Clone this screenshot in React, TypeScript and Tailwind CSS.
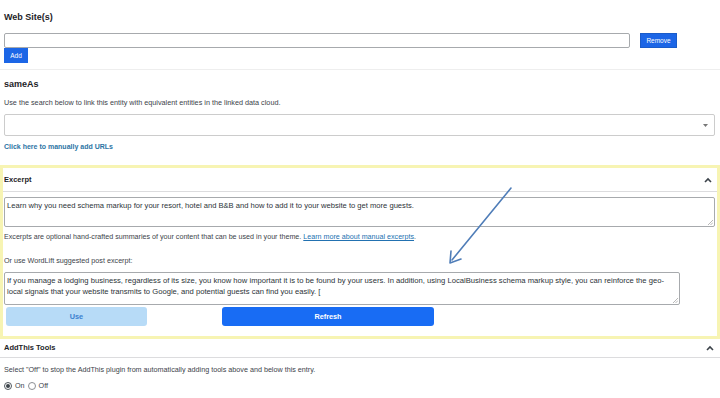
import React from "react";

const Chevron = () => (
  <svg width="8" height="6" viewBox="0 0 8 6" className="block">
    <polyline points="1,5 4,2 7,5" fill="none" stroke="#3c434a" strokeWidth="1.6" />
  </svg>
);

const Grip = () => (
  <svg width="6" height="6" viewBox="0 0 6 6" className="absolute right-[1px] bottom-[1px]">
    <line x1="1" y1="6" x2="6" y2="1" stroke="#999" strokeWidth="0.7" />
    <line x1="3.5" y1="6" x2="6" y2="3.5" stroke="#999" strokeWidth="0.7" />
  </svg>
);

export default function App() {
  return (
    <div
      className="relative w-[720px] h-[398px] overflow-hidden bg-white text-[#3c434a]"
      style={{ fontFamily: '"Liberation Sans", Arial, sans-serif' }}
    >
      {/* Web Site(s) */}
      <div className="pt-[11px] px-[4px] pb-[6px] border-b border-[#eeeeee]">
        <div className="h-[12px] leading-[12px] text-[9px] font-bold text-[#1d2327]">Web Site(s)</div>
        <div className="mt-[10px] flex items-center h-[15px]">
          <div className="w-[626px] h-[15px] border border-[#a7aaad] rounded-[2px] bg-white" />
          <div className="ml-[10px] w-[37px] h-[15px] bg-[#1c66e6] border border-[#1a5cc9] text-white text-[6.5px] leading-[13px] text-center">
            Remove
          </div>
        </div>
        <div className="w-[24px] h-[15px] bg-[#1c66e6] text-white text-[6.5px] leading-[15px] text-center">Add</div>
      </div>

      {/* sameAs */}
      <div className="px-[4px] pt-[8px]">
        <div className="h-[12px] leading-[12px] text-[9px] font-bold text-[#1d2327]">sameAs</div>
        <div className="mt-[8px] h-[10px] leading-[10px] text-[7.25px]">
          Use the search below to link this entity with equivalent entities in the linked data cloud.
        </div>
        <div className="mt-[6px] w-[711px] h-[22px] border border-[#cccccc] rounded-[2px] flex items-center justify-end pr-[6px]">
          <svg width="5" height="3" viewBox="0 0 5 3">
            <polygon points="0,0 5,0 2.5,3" fill="#777" />
          </svg>
        </div>
        <div className="mt-[6px] h-[10px] leading-[10px] text-[7px] font-bold text-[#2c74a4]">
          Click here to manually add URLs
        </div>
      </div>

      {/* Excerpt panel (highlighted) */}
      <div className="mt-[13px] border-[3px] border-[#f7f4b3] bg-white">
        <div className="h-[24px] flex items-center justify-between pl-[1px] pr-[5px] border-b border-[#dcdcde]">
          <span className="text-[7.5px] font-bold text-[#1d2327]">Excerpt</span>
          <Chevron />
        </div>
        <div className="pl-[1px] pr-[2px]">
          <div className="relative mt-[5px] h-[30px] border border-[#a7aaad] rounded-[2px] px-[2px] pt-[3px] text-[7.6px] leading-[10px] text-[#2c3338]">
            Learn why you need schema markup for your resort, hotel and B&amp;B and how to add it to your website to get more guests.
            <Grip />
          </div>
          <div className="mt-[5px] h-[10px] leading-[10px] text-[7.15px]">
            Excerpts are optional hand-crafted summaries of your content that can be used in your theme.{" "}
            <span className="text-[#2271b1] underline">Learn more about manual excerpts</span>.
          </div>
          <div className="mt-[14px] h-[10px] leading-[10px] text-[7.2px]">Or use WordLift suggested post excerpt:</div>
          <div className="relative mt-[6px] w-[676px] h-[33px] border border-[#a7aaad] rounded-[2px] pl-[2px] pr-[8px] pt-[2px] text-[7.65px] leading-[11px] text-[#2c3338]">
            If you manage a lodging business, regardless of its size, you know how important it is to be found by your users. In addition, using LocalBusiness schema markup style, you can reinforce the geo-local signals that your website transmits to Google, and potential guests can find you easily. [
            <Grip />
          </div>
          <div className="mt-[2px] flex items-center pl-[2px] pb-[10px]">
            <div className="w-[141px] h-[19px] rounded-[3px] bg-[#b7dbf7] text-[#3b80cf] text-[7.3px] font-bold leading-[19px] text-center">
              Use
            </div>
            <div className="ml-[75px] w-[212px] h-[19px] rounded-[3px] bg-[#186cf4] text-white text-[7.3px] font-bold leading-[19px] text-center">
              Refresh
            </div>
          </div>
        </div>
      </div>

      {/* AddThis Tools */}
      <div className="h-[19px] flex items-center justify-between pl-[4px] pr-[6px] border-b border-[#dcdcde]">
        <span className="text-[7.5px] font-bold text-[#1d2327]">AddThis Tools</span>
        <Chevron />
      </div>
      <div className="px-[4px]">
        <div className="mt-[7px] h-[10px] leading-[10px] text-[7.2px]">
          Select "Off" to stop the AddThis plugin from automatically adding tools above and below this entry.
        </div>
        <div className="mt-[6px] h-[10px] flex items-center text-[7.2px]">
          <span className="w-[8px] h-[8px] rounded-full border border-[#50575e] flex items-center justify-center">
            <span className="w-[4px] h-[4px] rounded-full bg-[#3c434a]" />
          </span>
          <span className="ml-[3px]">On</span>
          <span className="ml-[3px] w-[8px] h-[8px] rounded-full border border-[#8c8f94]" />
          <span className="ml-[3px]">Off</span>
        </div>
      </div>

      {/* Annotation arrow */}
      <svg className="absolute left-0 top-0 pointer-events-none" width="720" height="398">
        <line x1="511" y1="188" x2="452" y2="260" stroke="#4f7db8" strokeWidth="1.6" strokeLinecap="round" />
        <polyline points="451,251 450,263 461,259" fill="none" stroke="#4f7db8" strokeWidth="1.6" strokeLinecap="round" strokeLinejoin="round" />
      </svg>
    </div>
  );
}
